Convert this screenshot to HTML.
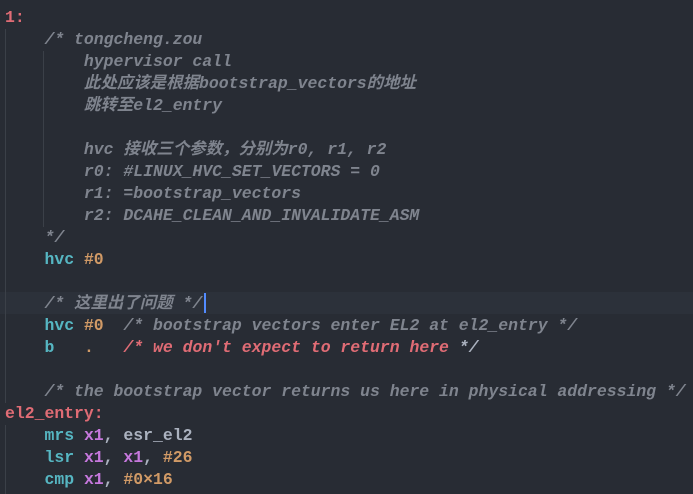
<!DOCTYPE html>
<html><head><meta charset="utf-8"><style>
html,body{margin:0;padding:0;background:#282c34;width:693px;height:494px;overflow:hidden}
.c{position:relative;font-family:"Liberation Mono","Noto Sans CJK SC",monospace;font-size:16.45px;font-weight:bold;color:#abb2bf}
.l{position:absolute;left:5px;height:22px;line-height:22px;white-space:pre}
.cm{color:#7f848e;font-style:italic}
.rc{color:#e06c75;font-style:italic}
.lb{color:#e06c75}
.k{color:#56b6c2}
.n{color:#d19a66}
.r{color:#c678dd}
.g{position:absolute;width:1px;background:#3b4048}
.hl{position:absolute;left:0;top:292px;width:693px;height:22px;background:#2c313a}
.cur{position:absolute;left:204px;top:293px;width:2px;height:20px;background:#528bff}
</style></head><body><div class="c">
<div class="hl"></div>
<div class="g" style="left:5px;top:29px;height:374px"></div>
<div class="g" style="left:5px;top:425px;height:71px"></div>
<div class="g" style="left:43px;top:51px;height:176px"></div>
<div class="l" style="top:-15px">                                                                </div>
<div class="l lb" style="top:7px">1:</div>
<div class="l" style="top:29px">    <span class="cm">/* tongcheng.zou</span></div>
<div class="l" style="top:51px">        <span class="cm">hypervisor call</span></div>
<div class="l" style="top:73px">        <span class="cm">此处应该是根据bootstrap_vectors的地址</span></div>
<div class="l" style="top:95px">        <span class="cm">跳转至el2_entry</span></div>
<div class="l" style="top:139px">        <span class="cm">hvc 接收三个参数，分别为r0, r1, r2</span></div>
<div class="l" style="top:161px">        <span class="cm">r0: #LINUX_HVC_SET_VECTORS = 0</span></div>
<div class="l" style="top:183px">        <span class="cm">r1: =bootstrap_vectors</span></div>
<div class="l" style="top:205px">        <span class="cm">r2: DCAHE_CLEAN_AND_INVALIDATE_ASM</span></div>
<div class="l" style="top:227px">    <span class="cm">*/</span></div>
<div class="l" style="top:249px">    <span class="k">hvc</span> <span class="n">#0</span></div>
<div class="l" style="top:293px">    <span class="cm">/* 这里出了问题 */</span></div>
<div class="l" style="top:315px">    <span class="k">hvc</span> <span class="n">#0</span>  <span class="cm">/* bootstrap vectors enter EL2 at el2_entry */</span></div>
<div class="l" style="top:337px">    <span class="k">b</span>   <span class="n">.</span>   <span class="rc">/* we don't expect to return here </span><span class="cm" style="color:#abb2bf">*/</span></div>
<div class="l" style="top:381px">    <span class="cm">/* the bootstrap vector returns us here in physical addressing */</span></div>
<div class="l lb" style="top:403px;left:5px">el2_entry:</div>
<div class="l" style="top:425px">    <span class="k">mrs</span> <span class="r">x1</span>, esr_el2</div>
<div class="l" style="top:447px">    <span class="k">lsr</span> <span class="r">x1</span>, <span class="r">x1</span>, <span class="n">#26</span></div>
<div class="l" style="top:469px">    <span class="k">cmp</span> <span class="r">x1</span>, <span class="n">#0×16</span></div>
<div class="cur"></div>
</div></body></html>
